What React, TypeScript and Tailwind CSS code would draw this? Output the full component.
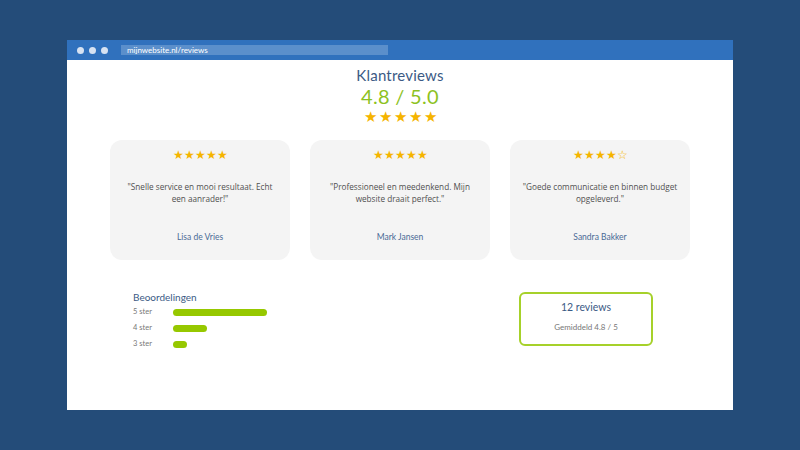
const reviews = [
  { stars: 5, text: '"Snelle service en mooi resultaat. Echt een aanrader!"', name: "Lisa de Vries" },
  { stars: 5, text: '"Professioneel en meedenkend. Mijn website draait perfect."', name: "Mark Jansen" },
  { stars: 4, text: '"Goede communicatie en binnen budget opgeleverd."', name: "Sandra Bakker" },
];

const ratings = [
  { label: "5 ster", width: 94 },
  { label: "4 ster", width: 34 },
  { label: "3 ster", width: 14 },
];

function Stars({ count }: { count: number }) {
  return (
    <div className="text-[11.5px] leading-none text-[#f5b400]">
      {"★".repeat(count)}
      {"☆".repeat(5 - count)}
    </div>
  );
}

export default function App() {
  return (
    <div className="w-[800px] h-[450px] bg-[#244c79] pt-[40px] pl-[67px] font-['Open_Sans',sans-serif]">
      <div className="w-[666px] h-[370px] bg-white flex flex-col">
        <div className="h-[20px] bg-[#3071bd] flex items-center px-[10px] gap-[5px]">
          <span className="w-[7px] h-[7px] rounded-full bg-[#d6e2f2]" />
          <span className="w-[7px] h-[7px] rounded-full bg-[#d6e2f2]" />
          <span className="w-[7px] h-[7px] rounded-full bg-[#d6e2f2]" />
          <div className="ml-[8px] w-[267px] h-[10px] bg-[#5b8fcb] text-[8px] leading-[10px] text-white px-[6px] font-['Lato',sans-serif]">
            mijnwebsite.nl/reviews
          </div>
        </div>

        <div className="flex flex-col items-center pt-[5px] font-['Lato',sans-serif]">
          <div className="text-[15px] leading-[20px] text-[#3b5a85] tracking-[0.2px]">Klantreviews</div>
          <div className="text-[20px] leading-[22px] text-[#8dc21f] tracking-[0.3px]">4.8 / 5.0</div>
          <div className="text-[15px] leading-[18px] text-[#f5b400] tracking-[2px] pl-[2px]">★★★★★</div>
        </div>

        <div className="flex gap-[20px] pl-[43px] mt-[15px]">
          {reviews.map((r) => (
            <div
              key={r.name}
              className="w-[180px] h-[120px] rounded-[12px] bg-[#f4f4f4] flex flex-col items-center pt-[9px] px-[10px]"
            >
              <Stars count={r.stars} />
              <p className="mt-[20px] h-[36px] text-[8.2px] leading-[12px] text-[#505050] text-center">{r.text}</p>
              <div className="mt-[14px] text-[8.5px] text-[#4a6a96] font-['Lato',sans-serif]">{r.name}</div>
            </div>
          ))}
        </div>

        <div className="flex justify-between mt-[31px] pl-[66px] pr-[80px] font-['Lato',sans-serif]">
          <div className="flex flex-col">
            <div className="text-[10px] leading-[13px] text-[#3b5a85]">Beoordelingen</div>
            {ratings.map((r) => (
              <div key={r.label} className="flex items-center h-[16px]">
                <span className="w-[40px] text-[7.5px] text-[#777]">{r.label}</span>
                <div className="h-[7px] rounded-full bg-[#96c800]" style={{ width: r.width }} />
              </div>
            ))}
          </div>
          <div className="w-[134px] h-[54px] mt-[1px] rounded-[6px] border-[2px] border-[#a6d12a] flex flex-col items-center pt-[6px]">
            <div className="text-[10.5px] leading-[14px] text-[#3b5a85]">12 reviews</div>
            <div className="mt-[7px] text-[8px] text-[#777]">Gemiddeld 4.8 / 5</div>
          </div>
        </div>
      </div>
    </div>
  );
}
